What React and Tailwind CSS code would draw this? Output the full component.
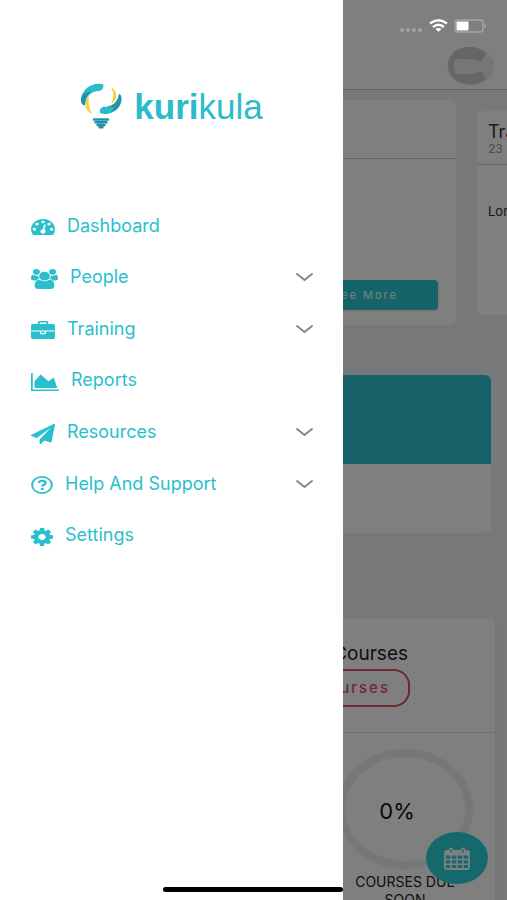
const iconPaths = {
  dashboard:
    "M384 1152q0-53-37.5-90.5t-90.5-37.5-90.5 37.5-37.5 90.5 37.5 90.5 90.5 37.5 90.5-37.5 37.5-90.5zm192-448q0-53-37.5-90.5t-90.5-37.5-90.5 37.5-37.5 90.5 37.5 90.5 90.5 37.5 90.5-37.5 37.5-90.5zm428 481l101-382q6-26-7.5-48.5t-38.5-29.5-48 6.5-30 39.5l-101 382q-60 5-107 43.5t-63 98.5q-20 77 20 146t117 89 146-20 89-117q16-60-6-117t-72-91zm660-33q0-53-37.5-90.5t-90.5-37.5-90.5 37.5-37.5 90.5 37.5 90.5 90.5 37.5 90.5-37.5 37.5-90.5zm-640-640q0-53-37.5-90.5t-90.5-37.5-90.5 37.5-37.5 90.5 37.5 90.5 90.5 37.5 90.5-37.5 37.5-90.5zm448 192q0-53-37.5-90.5t-90.5-37.5-90.5 37.5-37.5 90.5 37.5 90.5 90.5 37.5 90.5-37.5 37.5-90.5zm320 448q0 261-141 483-19 29-54 29h-1402q-35 0-54-29-141-221-141-483 0-182 71-348t191-286 286-191 348-71 348 71 286 191 191 286 71 348z",
  people:
    "M529 896q-162 5-265 128h-134q-82 0-138-40.5t-56-118.5q0-353 124-353 6 0 43.5 21t97.5 42.5 119 21.5q67 0 133-23-5 37-5 66 0 139 81 256zm1071 637q0 120-73 189.5t-194 69.5h-874q-121 0-194-69.5t-73-189.5q0-53 3.5-103.5t14-109 26.5-108.5 43-97.5 62-81 85.5-53.5 111.5-20q10 0 43 21.5t73 48 107 48 135 21.5 135-21.5 107-48 73-48 43-21.5q61 0 111.5 20t85.5 53.5 62 81 43 97.5 26.5 108.5 14 109 3.5 103.5zm-1024-1277q0 106-75 181t-181 75-181-75-75-181 75-181 181-75 181 75 75 181zm704 384q0 159-112.5 271.5t-271.5 112.5-271.5-112.5-112.5-271.5 112.5-271.5 271.5-112.5 271.5 112.5 112.5 271.5zm576 225q0 78-56 118.5t-138 40.5h-134q-103-123-265-128 81-117 81-256 0-29-5-66 66 23 133 23 59 0 119-21.5t97.5-42.5 43.5-21q124 0 124 353zm-128-609q0 106-75 181t-181 75-181-75-75-181 75-181 181-75 181 75 75 181z",
  training:
    "M640 256h512v-128h-512v128zm1152 640v480q0 66-47 113t-113 47h-1472q-66 0-113-47t-47-113v-480h672v160q0 26 19 45t45 19h320q26 0 45-19t19-45v-160h672zm-768 0v128h-256v-128h256zm768-480v384h-1792v-384q0-66 47-113t113-47h352v-160q0-40 28-68t68-28h576q40 0 68 28t28 68v160h352q66 0 113 47t47 113z",
  reports:
    "M2048 1536v128h-2048v-1536h128v1408h1920zm-384-1024l256 896h-1664v-576l448-576 576 576z",
  resources:
    "M1764 11q33 24 27 64l-256 1536q-5 29-32 45-14 8-31 8-11 0-24-5l-453-185-242 295q-18 23-49 23-13 0-22-4-19-7-30.5-23.5t-11.5-36.5v-349l864-1059-1069 925-395-162q-37-14-40-55-2-40 32-59l1664-960q15-9 32-9 20 0 36 11z",
  settings:
    "M1152 896q0-106-75-181t-181-75-181 75-75 181 75 181 181 75 181-75 75-181zm512-109v222q0 12-8 23t-20 13l-185 28q-19 54-39 91 35 50 107 138 10 12 10 25t-9 23q-27 37-99 108t-94 71q-12 0-26-9l-138-108q-44 23-91 38-16 136-29 186-7 28-36 28h-222q-14 0-24.5-8.5t-11.5-21.5l-28-184q-49-16-90-37l-141 107q-10 9-25 9-14 0-25-11-126-114-165-168-7-10-7-23 0-12 8-23 15-21 51-66.5t54-70.5q-27-50-41-99l-183-27q-13-2-21-12.5t-8-23.5v-222q0-12 8-23t19-13l186-28q14-46 39-92-40-57-107-138-10-12-10-24 0-10 9-23 26-36 98.5-107.5t94.5-71.5q13 0 26 10l138 107q44-23 91-38 16-136 29-186 7-28 36-28h222q14 0 24.5 8.5t11.5 21.5l28 184q49 16 90 37l142-107q9-9 24-9 13 0 25 10 129 119 165 170 7 8 7 22 0 12-8 23-15 21-51 66.5t-54 70.5q26 50 41 98l183 28q13 2 21 12.5t8 23.5z",
};

const menuItems = [
  { label: "Dashboard", icon: "dashboard", viewBox: "0 256 1792 1408", size: "w-6 h-4" },
  { label: "People", icon: "people", viewBox: "-64 0 1920 1792", size: "w-[27px] h-5", expandable: true },
  { label: "Training", icon: "training", viewBox: "0 0 1792 1536", size: "w-6 h-[18px]", expandable: true },
  { label: "Reports", icon: "reports", viewBox: "0 128 2048 1536", size: "w-7 h-[18px]" },
  { label: "Resources", icon: "resources", viewBox: "0 0 1792 1792", size: "w-6 h-5", expandable: true },
  { label: "Help And Support", icon: "help", viewBox: "0 0 24 24", size: "w-[22px] h-[18px]", expandable: true },
  { label: "Settings", icon: "settings", viewBox: "128 128 1536 1536", size: "w-[22px] h-[18px]" },
];

function MenuIcon({ icon, viewBox, size }) {
  return (
    <svg viewBox={viewBox} preserveAspectRatio="none" className={`${size} mt-[3px] shrink-0`} fill="currentColor" aria-hidden="true">
      {icon === "help" ? (
        <>
          <circle cx="12" cy="12" r="10.8" fill="none" stroke="currentColor" strokeWidth="2.2" />
          <path d="M8.2 9.2c.6-2 2-2.9 3.9-2.9 2.2 0 3.7 1.2 3.7 2.9 0 2.6-3.6 2.5-3.6 4.9" fill="none" stroke="currentColor" strokeWidth="2.7" />
          <rect x="10.7" y="15.8" width="3" height="2.9" />
        </>
      ) : (
        <path d={iconPaths[icon]} />
      )}
    </svg>
  );
}

function Logo() {
  return (
    <div className="flex items-center justify-center gap-3 text-[#2abccb]">
      <svg viewBox="0 0 42 46" className="w-[42px] h-[46px]" aria-hidden="true">
        <path d="M22 1C25 2 23 8 19 8C11 8 6 13 5 22C3 23 1 20 1 16C2 6 12-1 22 1z" fill="#2abccb" />
        <path d="M1 16C1 21 3 23 5 22C5 17 7 12 11 9C6 8 2 11 1 16z" fill="#2093a8" />
        <path d="M20 30C19 26 22 23 26 24C33 23 38 19 39 11C42 12 42 18 40 22C36 30 26 33 20 30z" fill="#2abccb" />
        <path d="M26 24C33 23 38 19 39 11C42 12 42 18 40 22C38 26 34 28 31 29C36 24 33 24 26 24z" fill="#2093a8" />
        <path d="M9 13C3 19 5 28 12 31C9 26 8 20 9 13z" fill="#f7cf3d" />
        <path d="M31 4C38 8 38 17 31 21C34 15 34 10 31 4z" fill="#f7cf3d" />
        <path d="M14 36.500h14M15.500 39.300h11M17.500 42h7M19.500 44.300h3" stroke="#2093a8" strokeWidth="2.400" strokeLinecap="round" />
      </svg>
      <span className="font-['Liberation_Sans',sans-serif] text-[35px] leading-none">
        <b>kuri</b>kula
      </span>
    </div>
  );
}

function Drawer() {
  return (
    <aside className="absolute inset-y-0 left-0 w-[343px] max-w-full bg-white flex flex-col pt-[83px]">
      <Logo />
      <nav className="grid auto-rows-fr h-[361px] mt-[71px] pl-[31px] pr-[30px]">
        {menuItems.map((item) => (
          <a key={item.label} href="#" className="flex items-center gap-3 text-[#2abfcd] text-[18px] leading-6">
            <MenuIcon icon={item.icon} viewBox={item.viewBox} size={item.size} />
            <span className="flex-1">{item.label}</span>
            {item.expandable && (
              <svg viewBox="0 0 17 10" className="w-[17px] h-[10px]" fill="none" stroke="#85878a" strokeWidth="2" aria-hidden="true">
                <path d="M1 2L8.500 8L16 2" strokeLinecap="round" />
              </svg>
            )}
          </a>
        ))}
      </nav>
      <div className="mt-auto mb-2 self-end w-[180px] h-[5px] rounded-full bg-black" />
    </aside>
  );
}

function StatusBar() {
  return (
    <div className="absolute top-[19px] right-5 flex items-center gap-[6px]">
      <svg viewBox="0 0 23 14" className="w-[23px] h-[14px]" fill="#a3a3a3" aria-hidden="true">
        <circle cx="2" cy="11" r="2" />
        <circle cx="8" cy="11" r="2" />
        <circle cx="14" cy="11" r="2" />
        <circle cx="20" cy="11" r="2" />
      </svg>
      <svg viewBox="0 0 19 14" className="w-[19px] h-[14px]" fill="none" stroke="white" strokeWidth="2.300" aria-hidden="true">
        <path d="M1 4.500Q9.500-2 18 4.500M4 8Q9.500 3.500 15 8" />
        <path d="M6.500 10Q9.500 7.800 12.500 10L9.500 12.800z" fill="white" stroke="none" />
      </svg>
      <svg viewBox="0 0 33 14" className="w-[33px] h-[14px]" aria-hidden="true">
        <rect x="1" y="1" width="28" height="12" rx="3" fill="none" stroke="#a6a6a6" strokeWidth="1.400" />
        <rect x="2.500" y="2.500" width="12" height="9" rx="1" fill="white" />
        <path d="M30.500 4.500q3 2.500 0 5z" fill="#a6a6a6" />
      </svg>
    </div>
  );
}

function CalendarIcon() {
  return (
    <svg viewBox="0 0 26 23" className="w-[26px] h-[23px]" fill="none" stroke="currentColor" aria-hidden="true">
      <rect x="1" y="4" width="24" height="18" rx="1.500" strokeWidth="1.800" />
      <path d="M1 6.500h24" strokeWidth="4" />
      <path d="M1 12.500h24M1 17.300h24M7 8v14M13 8v14M19 8v14" strokeWidth="1.500" />
      <path d="M7 2.500v3M19 2.500v3" strokeWidth="4" strokeLinecap="round" />
      <path d="M7 2.500v3M19 2.500v3" stroke="#2bd2d9" strokeWidth="1.400" />
    </svg>
  );
}

function Page() {
  return (
    <div className="h-full flex flex-col">
      <header className="h-[90px] shrink-0 flex items-end justify-end bg-white border-b border-[#c4c6c8] pr-3 pb-1">
        <svg viewBox="0 0 48 38" className="w-12 h-[38px]" role="img" aria-label="Profile">
          <ellipse cx="24" cy="19" rx="23.500" ry="18.500" fill="#ededed" />
          <path d="M39 6C30-2 13-2 5 7C-1 14 0 25 6 31C14 39 30 40 39 32L34 24C29 26 25 27 20 27H11Q7 27 7 23V16Q7 12 11 12H20C26 12 29 13 34 15z" fill="#cdcdcd" />
        </svg>
      </header>

      {/* Course carousel */}
      <section className="flex items-center gap-[21px] shrink-0 pl-[51px] pt-[10px] overflow-hidden">
        <article className="w-[calc(100%-51px)] shrink-0 h-[225px] bg-white rounded-md flex flex-col">
          <div className="h-[59px] border-b border-[#cfd1d3]" />
          <button className="mt-auto mb-[15px] mr-[18px] self-end w-[154px] h-[30px] pl-2 rounded-sm bg-[#28c8d2] text-white text-[11px] tracking-[2px] shadow">
            See More
          </button>
        </article>
        <article className="w-[calc(100%-51px)] shrink-0 h-[204px] bg-white rounded-md text-[#333]">
          <div className="h-[54px] border-b border-[#cfd1d3] px-[11px] pt-3">
            <h2 className="text-[18px] leading-[18px]">Training</h2>
            <p className="text-[12px] leading-4 text-[#9a9a9a]">23</p>
          </div>
          <p className="px-[11px] pt-[38px] text-[13px] leading-4">Lorem ipsum</p>
        </article>
      </section>

      <section className="mx-4 mt-[50px] h-[158px] shrink-0 bg-white rounded-md overflow-hidden">
        <div className="h-[89px] bg-[#2cc0ce]" />
      </section>

      <section className="mx-3 mt-[85px] shrink-0 bg-white rounded-md shadow text-black">
        <div className="h-[115px] border-b border-[#e2e4e6] flex flex-col items-end pr-[85px] pt-[25px]">
          <h2 className="pr-0.5 text-[19px] leading-[22px] text-[#222]">All Courses</h2>
          <button className="mt-1 h-[38px] px-[18px] border-2 border-[#e34b5c] rounded-2xl text-[#e34b5c] text-[15px] font-medium tracking-[2px]">
            View Courses
          </button>
        </div>
        <div className="flex flex-col items-end pr-[22px] pt-4 h-[180px]">
          <div className="w-[136px] flex flex-col items-center text-center">
            <div className="w-full h-[120px] pr-4 pt-1 rounded-[50%] border-[8px] border-[#eceeee] grid place-items-center text-[22px] text-[#111]">
              0%
            </div>
            <p className="mt-1 text-[14px] leading-[18px] text-[#222]">COURSES DUE SOON</p>
          </div>
        </div>
      </section>

      <button aria-label="Calendar" className="absolute right-[19px] bottom-4 w-[62px] h-[52px] rounded-[50%] bg-[#2bd2d9] text-white grid place-items-center">
        <CalendarIcon />
      </button>
    </div>
  );
}

export default function App() {
  return (
    <div className="relative h-screen overflow-hidden bg-[#ecf0f3] font-['Inter',sans-serif]">
      <Page />
      <div className="absolute inset-0 bg-black/50" />
      <StatusBar />
      <Drawer />
    </div>
  );
}
